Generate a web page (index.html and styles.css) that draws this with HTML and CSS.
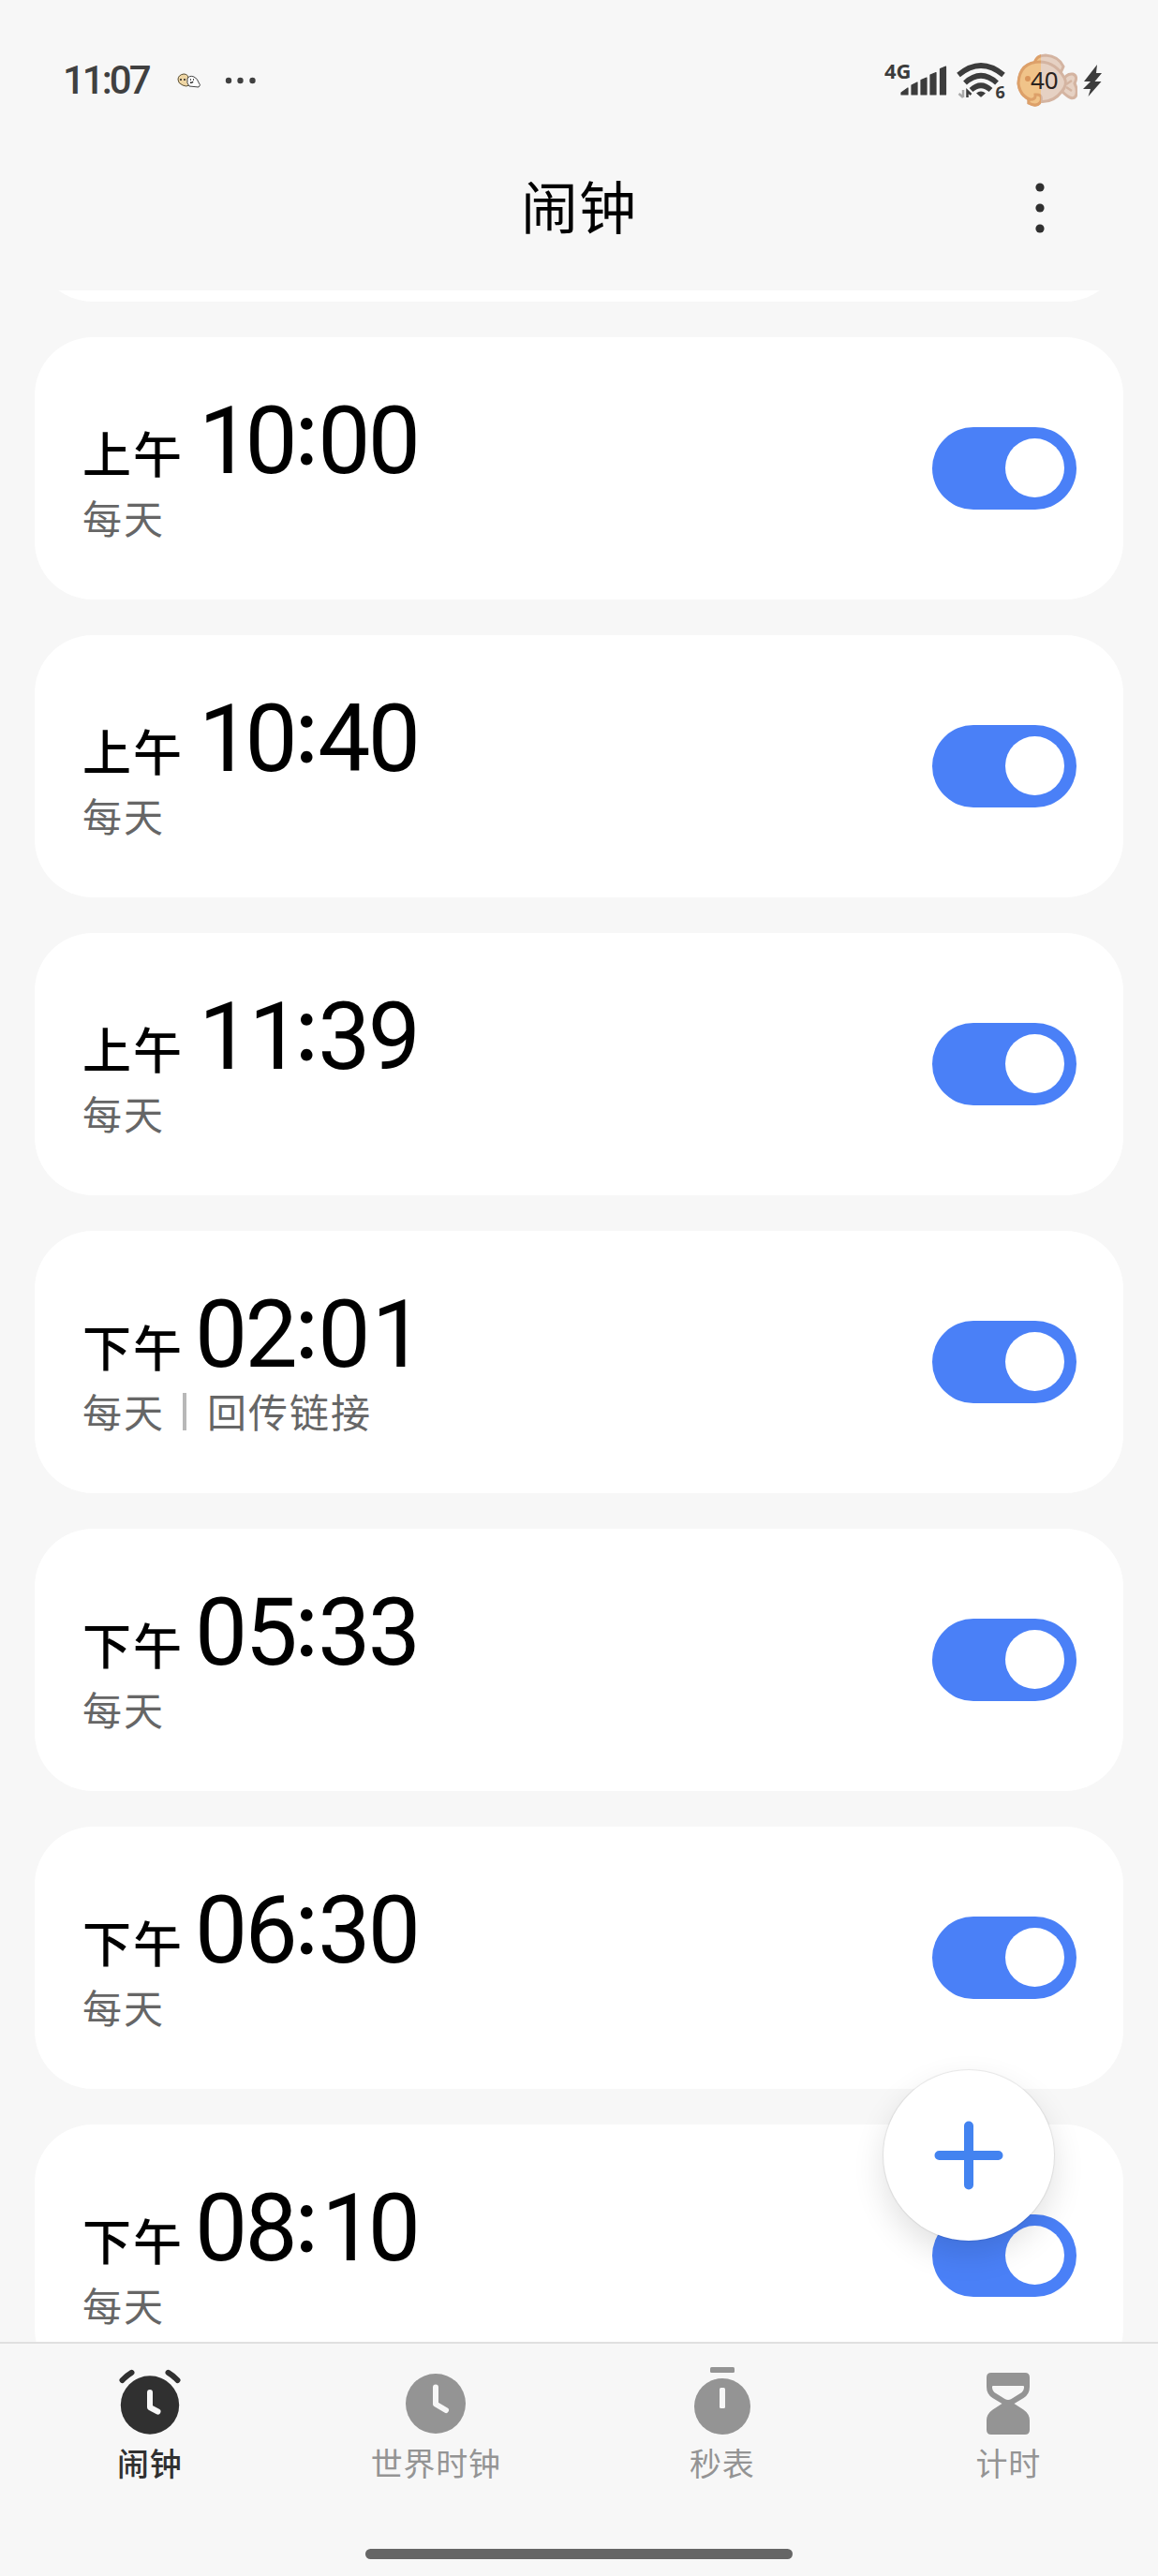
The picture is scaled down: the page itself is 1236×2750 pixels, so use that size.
FILE: index.html
```html
<!DOCTYPE html>
<html lang="zh-CN">
<head>
    <meta charset="UTF-8">
    <meta name="viewport" content="width=device-width, initial-scale=1.0">
    <title>闹钟</title>
    <link rel="stylesheet" href="styles.css">
</head>
<body>
    <div class="phone">
        <div class="status-bar">
            <div class="status-left">
                <span class="status-time">11:07</span>
                <svg class="notice" width="26" height="16" viewBox="0 0 26 16">
                    <path d="M13 13 Q10 15 6 13 Q1 11 1 7 Q1 2 7 1 Q12 1 12 6Z" fill="#efd6a4" stroke="#5b5034" stroke-width="1"/>
                    <path d="M11 6 Q13 2 18 4 Q22 6 23 10 Q26 13 23 15 L13 14 Q10 11 11 6Z" fill="#fff" stroke="#444" stroke-width="1"/>
                    <path d="M3 7h2M7 7h2M14 7h1M17 7h1M14 10q2 1 3-1" stroke="#222" stroke-width="1.4" fill="none"/>
                </svg>
                <svg class="more-notices" width="34" height="8" viewBox="0 0 34 8" fill="#404040">
                    <circle cx="4" cy="4" r="3.2"/>
                    <circle cx="16.5" cy="4" r="3.2"/>
                    <circle cx="29.5" cy="4" r="3.2"/>
                </svg>
            </div>
            <div class="status-right">
                <svg width="70" height="60" viewBox="0 0 70 60" fill="#3c3c3c">
                    <text class="network" x="0" y="28">4G</text>
                    <path d="M18 43 L25 38 V45 H18Z M29 35 L35 32 V45 H29Z M39 29.500 L45 27 V45 H39Z M49 24 L55 21.500 V45 H49Z M59.500 17.500 L65.500 15 V45 H59.500Z" stroke="#3c3c3c" stroke-width="1.200" stroke-linejoin="round"/>
                </svg>
                <svg width="56" height="60" viewBox="0 0 56 60">
                    <g fill="none" stroke="#3c3c3c" stroke-width="5.600">
                        <path d="M3 24 Q27 4 51 24"/>
                        <path d="M10 32.500 Q27 17 44 32.500"/>
                        <path d="M16.500 40 Q27 30.500 37.500 40"/>
                    </g>
                    <path d="M22 43.500 Q27 39.500 32 43.500 L28 47 Q27 48 26 47Z" fill="#3c3c3c"/>
                    <path d="M8 40 V48 M8 48 L3.500 44" fill="none" stroke="#aaa" stroke-width="2.500"/>
                    <path d="M12.500 48 V41 L16.500 45" fill="none" stroke="#3c3c3c" stroke-width="2.500"/>
                    <text class="wifi-gen" x="42.500" y="49">6</text>
                </svg>
                <svg width="68" height="60" viewBox="-2 0 68 60">
                    <defs>
                        <clipPath id="charged"><rect x="0" y="0" width="27" height="60"/></clipPath>
                        <g id="fish">
                            <path d="M20 12 Q22 3 32 3 Q46 4 51 15 L48 22 L22 20Z"/>
                            <path d="M50 31 Q54 22 61 23 Q67 25 63 33 Q67 41 64 47 Q60 52 50 42Z"/>
                            <path d="M3 33 Q4 10 27 10 Q43 11 52 27 Q56 34 49 42 Q39 55 23 52 Q5 50 3 33Z"/>
                            <path d="M14 50 Q22 51 21 45 Q29 44 27 52 Q23 59 14 54Z"/>
                        </g>
                    </defs>
                    <use href="#fish" fill="#e6d1c3" stroke="#d4b4a1" stroke-width="3"/>
                    <use href="#fish" fill="#f0c389" stroke="#dda069" stroke-width="3" clip-path="url(#charged)"/>
                    <path d="M54 34 L60 30 M54 37 L60 41" stroke="#d4b4a1" stroke-width="2.500"/>
                    <circle cx="13" cy="28" r="3" fill="#d9955b"/>
                    <text class="charge" x="16" y="39">40</text>
                </svg>
                <svg width="20" height="60" viewBox="0 0 20 60">
                    <path d="M15 13 L1 31 H8 L0 39 H8 L5.500 47 L19.500 31 H12.500 L20 22 H14Z" fill="#3c3c3c"/>
                </svg>
            </div>
        </div>

        <div class="header">
            <h1>闹钟</h1>
            <svg class="menu" width="12" height="60" viewBox="0 0 12 60" fill="#303030">
                <circle cx="6" cy="8" r="4.600"/>
                <circle cx="6" cy="30" r="4.600"/>
                <circle cx="6" cy="52" r="4.600"/>
            </svg>
        </div>

        <div class="alarm-list">
            <div class="card card-scrolled"></div>
            <div class="card">
                <div class="info">
                    <div class="time-row"><span class="period">上午</span><span class="time"><span class="one">1</span>0<span class="colon">:</span>00</span></div>
                    <div class="repeat">每天</div>
                </div>
                <div class="toggle"><div class="knob"></div></div>
            </div>
            <div class="card">
                <div class="info">
                    <div class="time-row"><span class="period">上午</span><span class="time"><span class="one">1</span>0<span class="colon">:</span>40</span></div>
                    <div class="repeat">每天</div>
                </div>
                <div class="toggle"><div class="knob"></div></div>
            </div>
            <div class="card">
                <div class="info">
                    <div class="time-row"><span class="period">上午</span><span class="time"><span class="one">1</span><span class="one">1</span><span class="colon">:</span>39</span></div>
                    <div class="repeat">每天</div>
                </div>
                <div class="toggle"><div class="knob"></div></div>
            </div>
            <div class="card">
                <div class="info">
                    <div class="time-row"><span class="period">下午</span><span class="time">02<span class="colon">:</span>0<span class="one">1</span></span></div>
                    <div class="repeat">每天<span class="divider"></span>回传链接</div>
                </div>
                <div class="toggle"><div class="knob"></div></div>
            </div>
            <div class="card">
                <div class="info">
                    <div class="time-row"><span class="period">下午</span><span class="time">05<span class="colon">:</span>33</span></div>
                    <div class="repeat">每天</div>
                </div>
                <div class="toggle"><div class="knob"></div></div>
            </div>
            <div class="card">
                <div class="info">
                    <div class="time-row"><span class="period">下午</span><span class="time">06<span class="colon">:</span>30</span></div>
                    <div class="repeat">每天</div>
                </div>
                <div class="toggle"><div class="knob"></div></div>
            </div>
            <div class="card">
                <div class="info">
                    <div class="time-row"><span class="period">下午</span><span class="time">08<span class="colon">:</span><span class="one">1</span>0</span></div>
                    <div class="repeat">每天</div>
                </div>
                <div class="toggle"><div class="knob"></div></div>
            </div>
        </div>

        <div class="fab">
            <svg width="74" height="74" viewBox="0 0 74 74" stroke="#4383f0" stroke-width="10" stroke-linecap="round">
                <path d="M37 5.500V68.500M5.500 37H68.500"/>
            </svg>
        </div>

        <div class="tab-bar">
            <div class="tab active">
                <svg width="80" height="80" viewBox="0 0 80 80">
                    <circle cx="40" cy="45.500" r="31.200" fill="currentColor"/>
                    <path d="M10.500 19 Q15 14 20.500 10.800M69.500 19 Q65 14 59.500 10.800" fill="none" stroke="currentColor" stroke-width="6" stroke-linecap="round"/>
                    <path d="M40 32V48L48.500 52.500" fill="none" stroke="#f7f7f7" stroke-width="6" stroke-linecap="round" stroke-linejoin="round"/>
                </svg>
                <span>闹钟</span>
            </div>
            <div class="tab">
                <svg width="80" height="80" viewBox="0 0 80 80">
                    <circle cx="40" cy="44" r="32" fill="currentColor"/>
                    <path d="M40 26.500V44.500L51 51" fill="none" stroke="#f7f7f7" stroke-width="6" stroke-linecap="round" stroke-linejoin="round"/>
                </svg>
                <span>世界时钟</span>
            </div>
            <div class="tab">
                <svg width="80" height="80" viewBox="0 0 80 80">
                    <rect x="27" y="5" width="26" height="6" rx="1.500" fill="currentColor"/>
                    <circle cx="40" cy="47" r="30" fill="currentColor"/>
                    <rect x="37" y="27" width="6" height="22" rx="1.500" fill="#f7f7f7"/>
                </svg>
                <span>秒表</span>
            </div>
            <div class="tab">
                <svg width="80" height="80" viewBox="0 0 80 80">
                    <path d="M22 11H58Q63 11 63 16V26Q63 34 56.500 38L46.500 44L56.500 50.500Q63 55 63 62V72Q63 77 58 77H22Q17 77 17 72V62Q17 55 23.500 50.500L33.500 44L23.500 38Q17 34 17 26V16Q17 11 22 11Z" fill="currentColor"/>
                    <path d="M24 25H56Q57.500 25 57 27Q56.500 31 53 33L43 39.300Q40 40.700 37 39.300L27 33Q23.500 31 23 27Q22.500 25 24 25Z" fill="#f7f7f7"/>
                </svg>
                <span>计时</span>
            </div>
        </div>
        <div class="home-indicator"></div>
    </div>
</body>
</html>
```
FILE: styles.css
```css
* {
    box-sizing: border-box;
}
body {
    margin: 0;
    background-color: #f7f7f7;
    font-family: "Noto Sans CJK SC", sans-serif;
    color: #000;
}
.phone {
    position: relative;
    width: 1236px;
    height: 2750px;
    display: flex;
    flex-direction: column;
    align-items: center;
    overflow: hidden;
}
.status-bar {
    width: 100%;
    height: 134px;
    padding: 38px 60px 0 67px;
    display: flex;
    justify-content: space-between;
    flex-shrink: 0;
}
.status-left {
    display: flex;
    align-items: center;
    height: 96px;
}
.status-time {
    width: 122px;
    font: 500 42px/50px Roboto, sans-serif;
    letter-spacing: -3px;
    color: #404040;
}
.more-notices {
    margin-left: 25px;
}
.status-right {
    display: flex;
    gap: 6px;
    padding-top: 18px;
}
.network {
    font: 700 22px "Noto Sans", sans-serif;
}
.wifi-gen {
    font: 700 18px "Noto Sans", sans-serif;
    fill: #3c3c3c;
}
.charge {
    font: 400 26px "Noto Sans", sans-serif;
    fill: #2a2320;
}
.header {
    width: 100%;
    height: 176px;
    padding: 0 120px;
    display: grid;
    grid-template-columns: 1fr auto 1fr;
    align-items: center;
    flex-shrink: 0;
}
h1 {
    grid-column: 2;
    margin: 0;
    padding-bottom: 7px;
    font-size: 61px;
    font-weight: 400;
    line-height: 169px;
    letter-spacing: 1px;
}
.menu {
    justify-self: end;
}
.alarm-list {
    width: 100%;
    height: 2190px;
    padding: 0 37px;
    display: flex;
    flex-direction: column;
    gap: 38px;
    overflow: hidden;
    flex-shrink: 0;
}
.card {
    height: 280px;
    padding: 0 50px 0 51px;
    display: flex;
    justify-content: space-between;
    align-items: center;
    flex-shrink: 0;
    background-color: #fff;
    border-radius: 62px;
}
.card-scrolled {
    margin-top: -268px;
}
.info {
    height: 160px;
}
.time-row {
    display: flex;
    align-items: baseline;
    height: 104px;
    line-height: 101px;
}
.period {
    width: 120px;
    font-size: 52px;
    font-weight: 500;
    letter-spacing: 2px;
}
.time {
    font-family: Roboto, sans-serif;
    font-size: 100px;
    letter-spacing: -2.8px;
}
.colon {
    font-family: Lato, sans-serif;
    line-height: 1px;
    letter-spacing: -0.5px;
    vertical-align: 9px;
}
.one {
    margin-left: 4px;
    margin-right: -4px;
}
.repeat {
    display: flex;
    align-items: center;
    height: 56px;
    font-size: 42px;
    line-height: 56px;
    letter-spacing: 2px;
    color: #666;
}
.divider {
    width: 4px;
    height: 40px;
    margin: 2px 22px 0 19px;
    background-color: #b8b8b8;
}
.toggle {
    width: 154px;
    height: 88px;
    padding: 12px 13px;
    display: flex;
    justify-content: flex-end;
    background-color: #4a80f7;
    border-radius: 44px;
}
.knob {
    width: 63px;
    height: 63px;
    background-color: #fff;
    border-radius: 50%;
}
.fab {
    position: absolute;
    right: 111px;
    bottom: 358px;
    width: 182px;
    height: 182px;
    display: flex;
    justify-content: center;
    align-items: center;
    background-color: #fff;
    border-radius: 50%;
    box-shadow: 0 0 1px 1px rgba(0, 0, 0, 0.08), 0 14px 34px rgba(0, 0, 0, 0.12);
}
.tab-bar {
    width: 1236px;
    height: 221px;
    padding: 20px 7px 0;
    display: grid;
    grid-template-columns: repeat(4, 1fr);
    border-top: 2px solid #e0e0e0;
    flex-shrink: 0;
}
.tab {
    display: flex;
    flex-direction: column;
    align-items: center;
    font-size: 34px;
    line-height: 54px;
    letter-spacing: 0.8px;
    color: #949494;
}
.tab.active {
    font-weight: 500;
    color: #303030;
}
.home-indicator {
    width: 456px;
    height: 11px;
    background-color: #666;
    border-radius: 6px;
    flex-shrink: 0;
}
```
